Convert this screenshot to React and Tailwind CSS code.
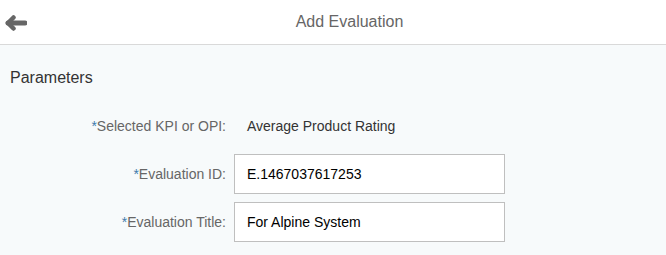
import React from "react";

const BackArrow = () => (
  <svg width="23" height="16" viewBox="0 0 23 16" fill="none">
    <path d="M4 8 H21" stroke="#666666" strokeWidth="5" strokeLinecap="round" />
    <path
      d="M9.5 2.5 L4 8 L9.5 13.5"
      stroke="#666666"
      strokeWidth="4.5"
      strokeLinecap="round"
      strokeLinejoin="round"
    />
  </svg>
);

const Label = ({ children }) => (
  <div className="text-right text-[14px] text-[#666666]">
    <span className="text-[#427cac]">*</span>
    {children}
  </div>
);

const Field = ({ value }) => (
  <div className="flex h-[40px] w-[271px] items-center border border-[#bfbfbf] bg-white px-[12px] text-[14px] text-[#000000]">
    {value}
  </div>
);

const App = () => {
  return (
    <div
      className="h-[255px] w-[666px] overflow-hidden bg-[#f7fafb]"
      style={{ fontFamily: '"Liberation Sans", Arial, sans-serif' }}
    >
      <div className="flex h-[45px] items-center border-b border-[#d9d9d9] bg-white">
        <button className="flex h-full w-[33px] items-center justify-start pl-[4px] pt-[1px]">
          <BackArrow />
        </button>
        <h1 className="flex-1 text-center text-[16px] text-[#666666]">
          Add Evaluation
        </h1>
      </div>

      <div className="px-[10px] pt-[23px]">
        <h2 className="h-[20px] text-[16px] leading-[20px] text-[#333333]">
          Parameters
        </h2>
      </div>

      <div className="mt-[18px] grid grid-cols-[226px_271px] items-center gap-x-[8px] gap-y-[8px]">
        <Label>Selected KPI or OPI:</Label>
        <div className="flex h-[40px] items-center px-[13px] text-[14px] text-[#333333]">
          Average Product Rating
        </div>
        <Label>Evaluation ID:</Label>
        <Field value="E.1467037617253" />
        <Label>Evaluation Title:</Label>
        <Field value="For Alpine System" />
      </div>
    </div>
  );
};

export default App;
